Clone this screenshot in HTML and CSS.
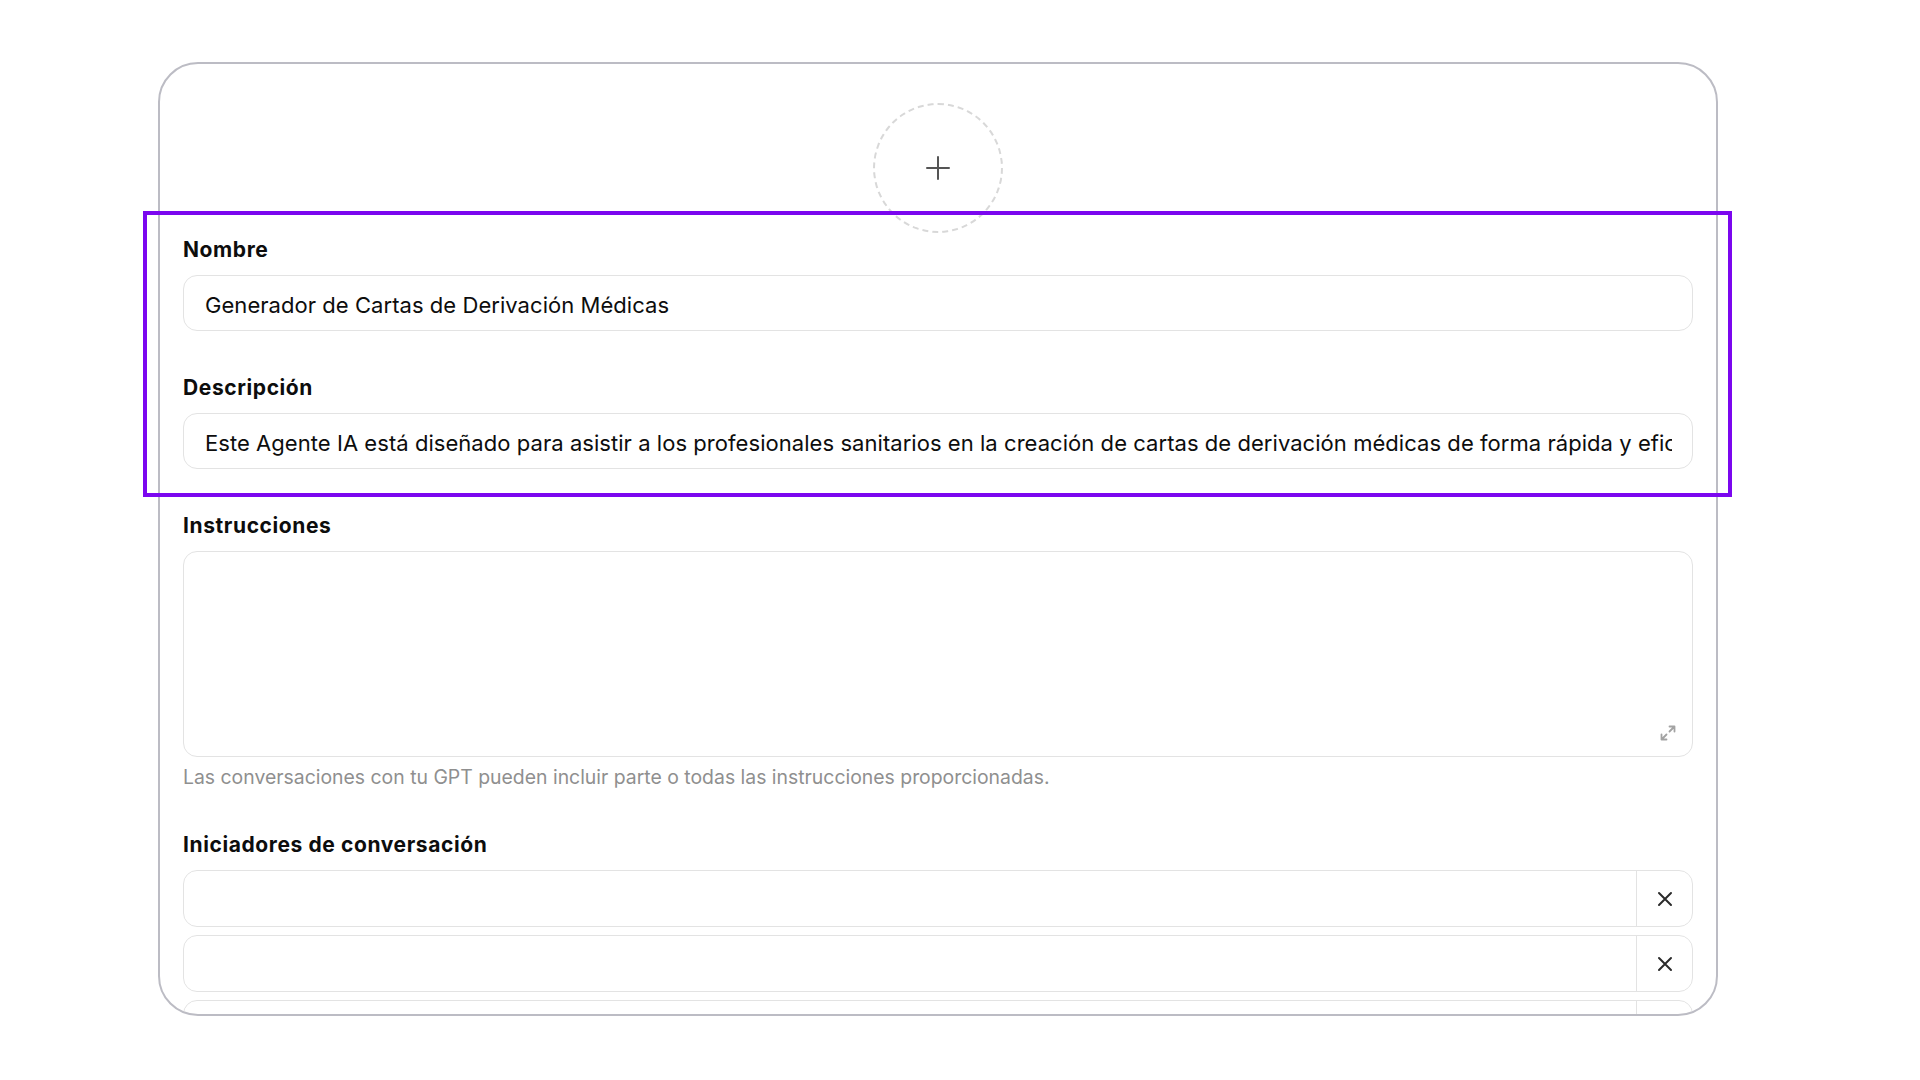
FILE: index.html
```html
<!DOCTYPE html>
<html lang="es">
<head>
<meta charset="utf-8">
<title>Configurar GPT</title>
<link rel="stylesheet" href="styles.css">
</head>
<body>
<div class="page">
  <div class="frame">
    <div class="avatar-row">
      <div class="avatar">
        <svg class="plus" width="24" height="24" viewBox="0 0 24 24" fill="none" stroke="#555" stroke-width="2" stroke-linecap="round"><path d="M12 1v22M1 12h22"/></svg>
      </div>
    </div>

    <div class="group">
      <div class="label">Nombre</div>
      <div class="field"><div class="field-text">Generador de Cartas de Derivación Médicas</div></div>
    </div>

    <div class="group">
      <div class="label">Descripción</div>
      <div class="field"><div class="field-text">Este Agente IA está diseñado para asistir a los profesionales sanitarios en la creación de cartas de derivación médicas de forma rápida y eficiente.</div></div>
    </div>

    <div class="group">
      <div class="label">Instrucciones</div>
      <div class="textarea">
        <svg class="expand" width="20" height="20" viewBox="0 0 20 20" fill="none" stroke="#a3a3a3" stroke-width="1.8" stroke-linecap="round" stroke-linejoin="round"><path d="M11.5 8.5L16.5 3.5M11.5 3.5h5v5M8.5 11.5L3.5 16.5M3.5 11.5v5h5"/></svg>
      </div>
      <div class="helper">Las conversaciones con tu GPT pueden incluir parte o todas las instrucciones proporcionadas.</div>
    </div>

    <div class="group">
      <div class="label">Iniciadores de conversación</div>
      <div class="starters">
        <div class="starter"><div class="starter-input"></div><div class="starter-btn"><svg width="16" height="16" viewBox="0 0 16 16" fill="none" stroke="#2b2b2b" stroke-width="2" stroke-linecap="round"><path d="M2 2l12 12M14 2L2 14"/></svg></div></div>
        <div class="starter"><div class="starter-input"></div><div class="starter-btn"><svg width="16" height="16" viewBox="0 0 16 16" fill="none" stroke="#2b2b2b" stroke-width="2" stroke-linecap="round"><path d="M2 2l12 12M14 2L2 14"/></svg></div></div>
        <div class="starter"><div class="starter-input"></div><div class="starter-btn"></div></div>
      </div>
    </div>
  </div>
  <div class="highlight"></div>
</div>
</body>
</html>
```

FILE: styles.css
```css
* { box-sizing: border-box; }

html, body {
  margin: 0;
  padding: 0;
  background: #ffffff;
}

body {
  font-family: Inter, "Noto Sans", "Liberation Sans", sans-serif;
  color: #0d0d0d;
}

.page {
  position: relative;
  width: 1920px;
  height: 1080px;
  padding: 62px 0 0 158px;
}

.frame {
  width: 1560px;
  height: 954px;
  border: 2px solid #bcbcc4;
  border-radius: 40px;
  overflow: hidden;
  padding: 39px 23px 0 23px;
  background: #fff;
}

.avatar-row {
  display: flex;
  justify-content: center;
  margin-bottom: 3px;
}

.avatar {
  width: 130px;
  height: 130px;
  border: 2px dashed #d8d8d8;
  border-radius: 50%;
  display: flex;
  align-items: center;
  justify-content: center;
}

.group {
  margin-bottom: 43px;
}

.label {
  font-size: 21px;
  font-weight: 700;
  letter-spacing: 0.6px;
  line-height: 28px;
  margin-bottom: 11px;
  color: #0d0d0d;
}

.field {
  height: 56px;
  border: 1px solid #e3e3e3;
  border-radius: 14px;
  padding: 3px 20px 0 21px;
  display: flex;
  align-items: center;
}

.field-text {
  font-size: 22px;
  letter-spacing: 0.05px;
  line-height: 28px;
  white-space: nowrap;
  overflow: hidden;
  width: 100%;
  color: #0d0d0d;
}

.textarea {
  position: relative;
  height: 206px;
  border: 1px solid #e3e3e3;
  border-radius: 14px;
}

.expand {
  position: absolute;
  right: 14px;
  bottom: 13px;
}

.helper {
  margin-top: 8px;
  font-size: 19.4px;
  line-height: 25px;
  color: #8f8f8f;
  margin-bottom: -2px;
}

.starters {
  display: flex;
  flex-direction: column;
  gap: 8px;
}

.starter {
  height: 57px;
  border: 1px solid #e3e3e3;
  border-radius: 14px;
  display: flex;
  flex-shrink: 0;
}

.starter-input {
  flex: 1;
}

.starter-btn {
  width: 56px;
  border-left: 1px solid #e3e3e3;
  display: flex;
  align-items: center;
  justify-content: center;
}

.highlight {
  position: absolute;
  left: 143px;
  top: 211px;
  width: 1589px;
  height: 286px;
  border: 4px solid #7b06ef;
  pointer-events: none;
}
```
